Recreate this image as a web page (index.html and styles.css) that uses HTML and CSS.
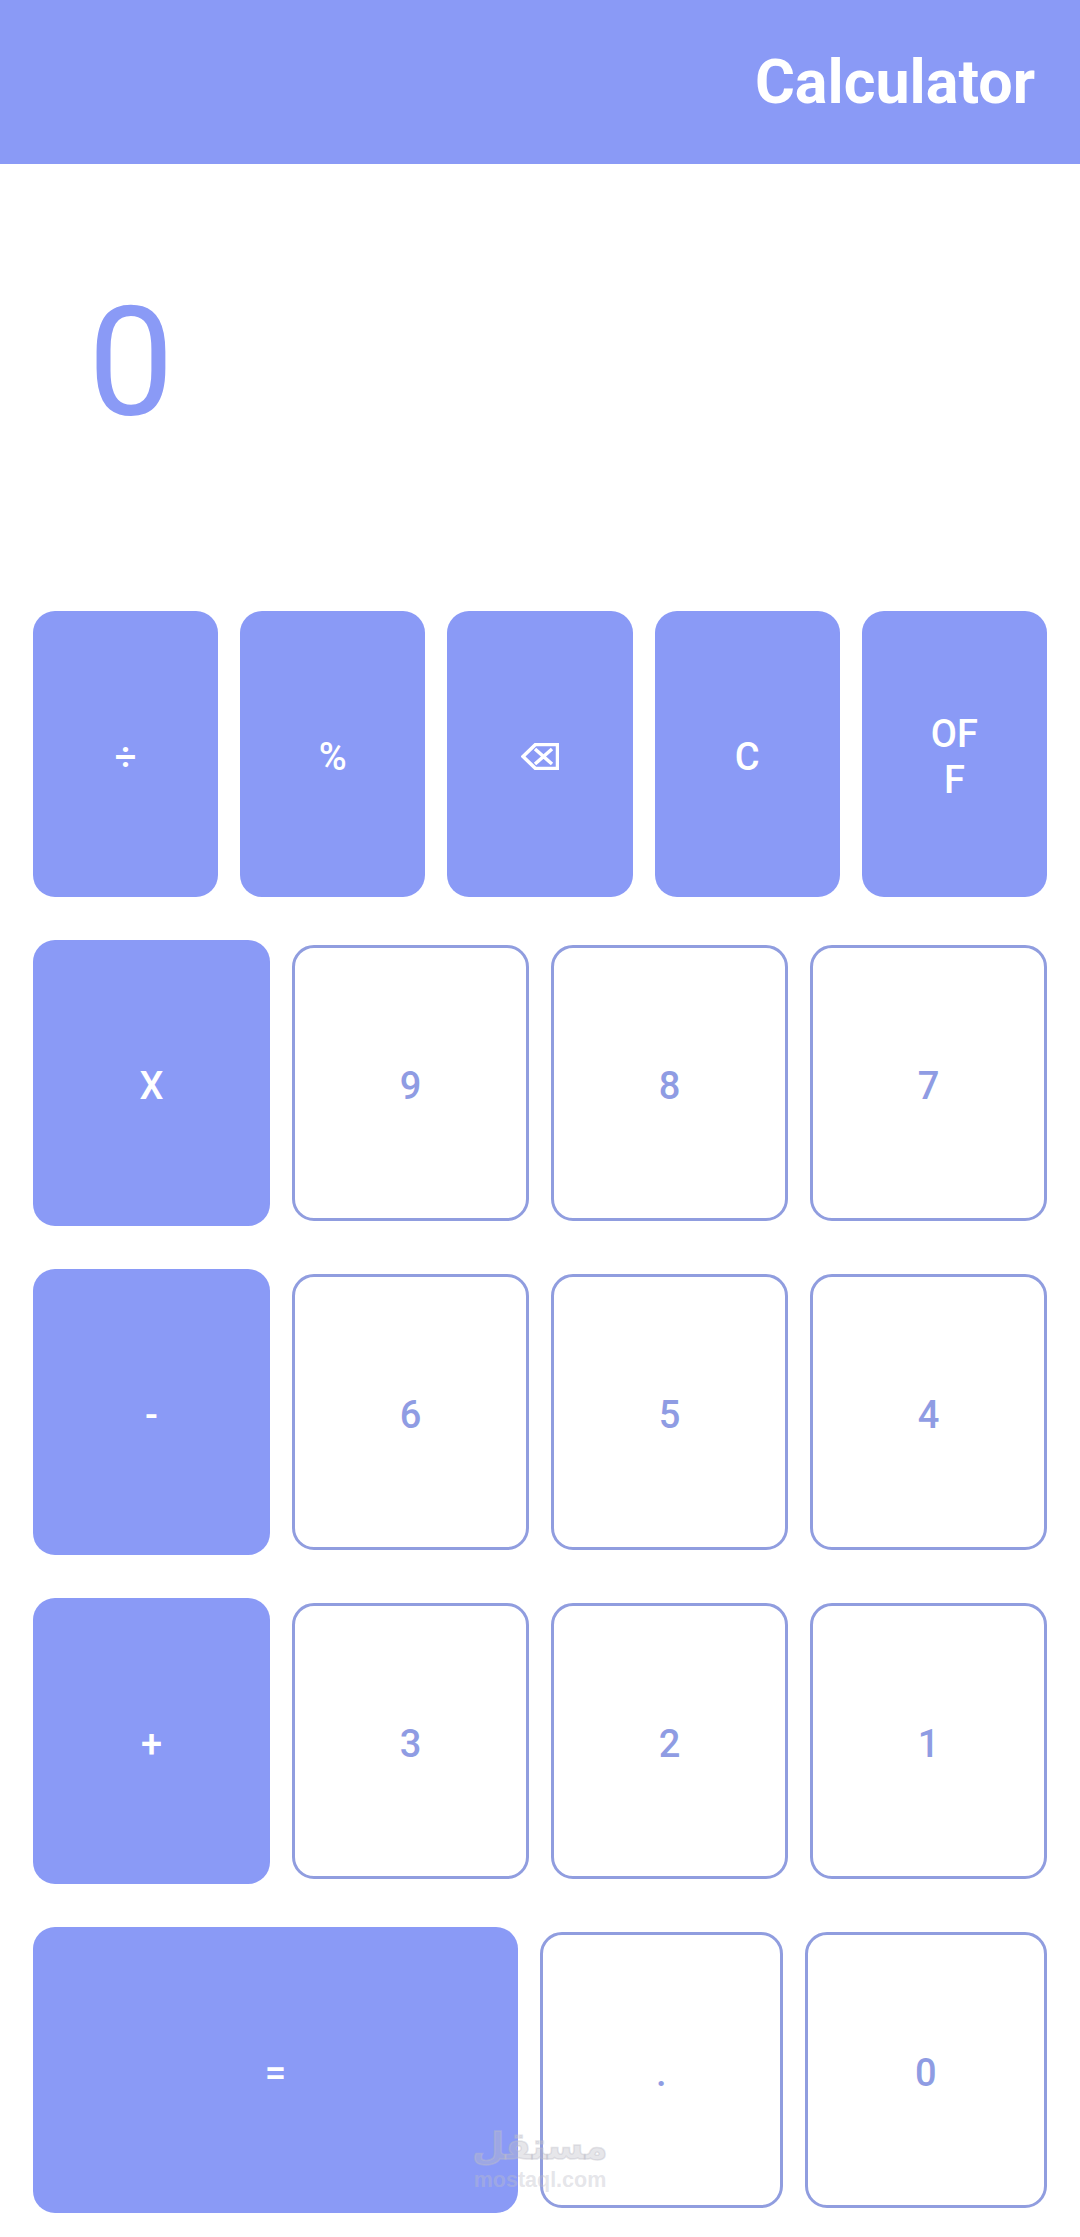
FILE: index.html
```html
<!DOCTYPE html>
<html lang="en">
<head>
  <meta name="viewport" content="width=device-width, initial-scale=1.0">
  <title>Calculator</title>
  <link rel="stylesheet" href="styles.css">
</head>
<body>
  <header class="app-bar">
    <h1 class="app-title">Calculator</h1>
  </header>
  <div class="display">0</div>
  <main class="keypad">
    <div class="key-row key-row-top">
      <button class="key key-fill">÷</button>
      <button class="key key-fill">%</button>
      <button class="key key-fill" aria-label="Backspace">
        <svg class="backspace-icon" width="38" height="27" viewBox="0 0 38 27">
          <path d="M14.5 1.5H36.5V25.5H14.5L2 13.5Z" fill="none" stroke="#fff" stroke-width="3.5"/>
          <path d="M14 6L31 21M31 6L14 21" fill="none" stroke="#fff" stroke-width="3.5"/>
        </svg>
      </button>
      <button class="key key-fill">C</button>
      <button class="key key-fill">OF<br>F</button>
    </div>
    <div class="key-row">
      <button class="key key-fill">X</button>
      <button class="key key-line">9</button>
      <button class="key key-line">8</button>
      <button class="key key-line">7</button>
    </div>
    <div class="key-row">
      <button class="key key-fill">-</button>
      <button class="key key-line">6</button>
      <button class="key key-line">5</button>
      <button class="key key-line">4</button>
    </div>
    <div class="key-row">
      <button class="key key-fill">+</button>
      <button class="key key-line">3</button>
      <button class="key key-line">2</button>
      <button class="key key-line">1</button>
    </div>
    <div class="key-row key-row-bottom">
      <button class="key key-fill">=</button>
      <button class="key key-line">.</button>
      <button class="key key-line">0</button>
    </div>
  </main>
  <div class="watermark">
    <span class="watermark-ar" lang="ar" dir="rtl">مستقل</span>
    <span class="watermark-en">mostaql.com</span>
  </div>
</body>
</html>
```

FILE: styles.css
```css
body {
  position: relative;
  width: 1080px;
  height: 2237px;
  margin: 0;
  overflow: hidden;
  background-color: #ffffff;
  font-family: Roboto, sans-serif;
}
.app-bar {
  display: flex;
  align-items: center;
  justify-content: flex-end;
  height: 164px;
  padding-right: 45px;
  background-color: #8a9af6;
}
.app-title {
  margin: 0;
  font-size: 61px;
  font-weight: 700;
  color: #ffffff;
}
.display {
  height: 447px;
  padding-left: 88px;
  font-size: 153px;
  line-height: 398px;
  color: #8a9af6;
}
.keypad {
  display: flex;
  flex-direction: column;
  gap: 43.5px;
  padding: 0 33px;
}
.key-row {
  display: grid;
  grid-template-columns: repeat(4, 1fr);
  gap: 22px;
  height: 285.5px;
}
.key-row-top {
  grid-template-columns: repeat(5, 1fr);
}
.key-row-bottom {
  grid-template-columns: 2fr 1fr 1fr;
}
.key {
  min-width: 0;
  padding: 6px 0 0;
  border: none;
  border-radius: 22px;
  font-family: Roboto, sans-serif;
  font-size: 38px;
  font-weight: 500;
  line-height: 46px;
}
.key-fill {
  background-color: #8a9af6;
  color: #ffffff;
}
.key-line {
  margin: 5px 0;
  border: 3.5px solid #909ddf;
  background-color: #ffffff;
  color: #8f9ce3;
}
.backspace-icon {
  display: block;
  margin: 0 auto;
}
.watermark {
  position: absolute;
  left: 474px;
  top: 2125px;
  width: 132px;
  display: flex;
  flex-direction: column;
  align-items: center;
  color: rgba(190, 190, 200, 0.4);
  pointer-events: none;
}
.watermark-ar {
  font-family: "DejaVu Sans", sans-serif;
  font-size: 37px;
  font-weight: 700;
  line-height: 44px;
  -webkit-text-stroke: 1.5px rgba(190, 190, 200, 0.4);
}
.watermark-en {
  font-family: "Liberation Sans", sans-serif;
  font-size: 21.5px;
  font-weight: 700;
  line-height: 22px;
}
```
